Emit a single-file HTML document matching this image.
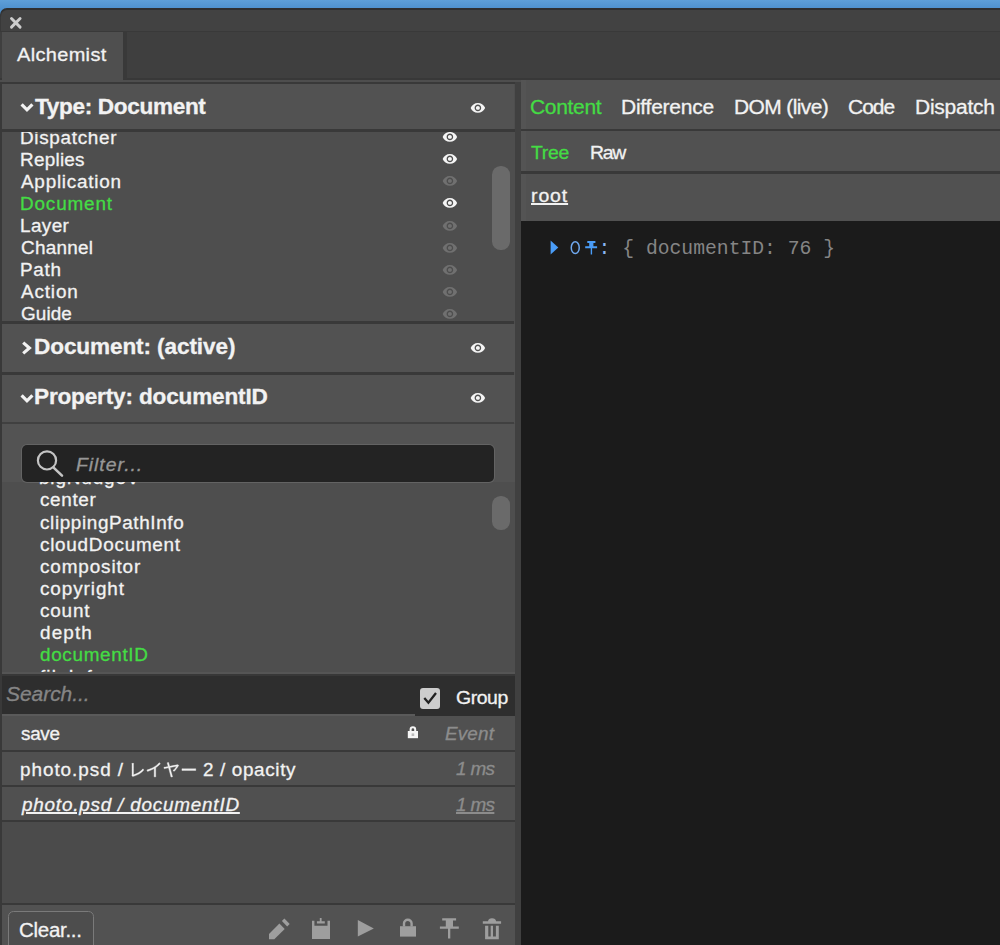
<!DOCTYPE html>
<html><head><meta charset="utf-8">
<style>
*{box-sizing:border-box;margin:0;padding:0}
html,body{width:1000px;height:945px;overflow:hidden;background:#4a8fd0}
body{font-family:"Liberation Sans",sans-serif;color:#f2f2f2;position:relative;font-size:18px}
div,svg{position:absolute}
.t{-webkit-text-stroke:0.3px currentColor;white-space:nowrap;line-height:24px;height:24px;transform-origin:0 50%}
.clip{left:0;width:514px;overflow:hidden}
.ln{background:#393939}
</style></head><body>
<!-- window chrome -->
<div style="left:0;top:0;width:1000px;height:12px;background:linear-gradient(#5e9fd8,#4e90cd 9px)"></div>
<div style="left:0;top:8.4px;width:1000px;height:937px;background:#2f2f2f;border-top-left-radius:7px"></div>
<div style="left:0;top:9.6px;width:1000px;height:936px;background:#393939;border-top-left-radius:6.5px"></div>
<div style="left:0.6px;top:9.6px;width:1000px;height:21.6px;background:#424242;border-top-left-radius:6.5px"></div>
<svg style="left:7.7px;top:14.7px" width="16" height="16" viewBox="0 0 16 16"><path d="M3.5 3.5 L12.1 12.1 M12.1 3.5 L3.5 12.1" stroke="#cccccc" stroke-width="2.9" stroke-linecap="round" fill="none"/></svg>
<!-- tab strip -->
<div style="left:0;top:32px;width:1000px;height:46px;background:#3f3f3f"></div>
<div style="left:0;top:78px;width:1000px;height:2px;background:#383838"></div>
<div style="left:0;top:80px;width:1000px;height:2px;background:#4e4e4e"></div>
<div style="left:1.5px;top:32px;width:121.3px;height:50px;background:#4f4f4f"></div>
<div style="left:122.8px;top:32px;width:4px;height:47px;background:#393939"></div>
<!-- panels -->
<div class="ln" style="left:0;top:81.7px;width:521px;height:2.3px"></div>
<div style="left:2px;top:84px;width:512.6px;height:861px;background:#4e4e4e"></div>
<div style="left:514.6px;top:82px;width:6.4px;height:863px;background:#404040"></div>
<div style="left:521px;top:80px;width:479px;height:144px;background:#515151"></div>
<div style="left:521px;top:80px;width:5px;height:141px;background:#545454"></div>
<div style="left:521px;top:221px;width:479px;height:724px;background:#1b1b1b"></div>

<!-- LEFT headers -->
<div style="left:2px;top:84px;width:512px;height:46px;background:#525252"></div>
<div class="ln" style="left:2px;top:129.3px;width:512.6px;height:2.7px"></div>
<div class="ln" style="left:2px;top:321px;width:512px;height:3px"></div>
<div style="left:2px;top:324px;width:512.6px;height:47.5px;background:#525252"></div>
<div class="ln" style="left:2px;top:371.5px;width:512px;height:3px"></div>
<div style="left:2px;top:374.5px;width:512.6px;height:48px;background:#525252"></div>
<div class="ln" style="left:2px;top:422px;width:512px;height:2px;background:#404040"></div>
<div style="left:2px;top:424px;width:512.6px;height:58px;background:#535353"></div>
<!-- chevrons -->
<svg style="left:18px;top:98px" width="18" height="18" viewBox="0 0 18 18"><path d="M3.6 6.3 L9 11.8 L14.4 6.3" stroke="#f2f2f2" stroke-width="3.2" fill="none"/></svg>
<svg style="left:18px;top:339px" width="18" height="18" viewBox="0 0 18 18"><path d="M5.2 3.6 L11.4 9 L5.2 14.4" stroke="#f2f2f2" stroke-width="3.2" fill="none"/></svg>
<svg style="left:18px;top:389px" width="18" height="18" viewBox="0 0 18 18"><path d="M3.6 6.3 L9 11.8 L14.4 6.3" stroke="#f2f2f2" stroke-width="3.2" fill="none"/></svg>
<!-- eyes -->
<svg style="left:469.7px;top:99.9px" width="15.8" height="15.8" viewBox="0 0 24 24"><path fill="#f5f5f5" d="M12 4.5C7 4.5 2.73 7.61 1 12c1.73 4.39 6 7.5 11 7.5s9.27-3.11 11-7.5c-1.73-4.39-6-7.5-11-7.5zM12 17c-2.76 0-5-2.24-5-5s2.24-5 5-5 5 2.24 5 5-2.24 5-5 5zm0-8c-1.66 0-3 1.34-3 3s1.34 3 3 3 3-1.34 3-3-1.34-3-3-3z"/></svg>
<svg style="left:469.9px;top:339.9px" width="15.8" height="15.8" viewBox="0 0 24 24"><path fill="#f5f5f5" d="M12 4.5C7 4.5 2.73 7.61 1 12c1.73 4.39 6 7.5 11 7.5s9.27-3.11 11-7.5c-1.73-4.39-6-7.5-11-7.5zM12 17c-2.76 0-5-2.24-5-5s2.24-5 5-5 5 2.24 5 5-2.24 5-5 5zm0-8c-1.66 0-3 1.34-3 3s1.34 3 3 3 3-1.34 3-3-1.34-3-3-3z"/></svg>
<svg style="left:469.9px;top:390.3px" width="15.8" height="15.8" viewBox="0 0 24 24"><path fill="#f5f5f5" d="M12 4.5C7 4.5 2.73 7.61 1 12c1.73 4.39 6 7.5 11 7.5s9.27-3.11 11-7.5c-1.73-4.39-6-7.5-11-7.5zM12 17c-2.76 0-5-2.24-5-5s2.24-5 5-5 5 2.24 5 5-2.24 5-5 5zm0-8c-1.66 0-3 1.34-3 3s1.34 3 3 3 3-1.34 3-3-1.34-3-3-3z"/></svg>
<div class="clip" style="top:132px;height:189px">
<svg style="left:442.4px;top:-2.9px" width="15.8" height="15.8" viewBox="0 0 24 24"><path fill="#f5f5f5" d="M12 4.5C7 4.5 2.73 7.61 1 12c1.73 4.39 6 7.5 11 7.5s9.27-3.11 11-7.5c-1.73-4.39-6-7.5-11-7.5zM12 17c-2.76 0-5-2.24-5-5s2.24-5 5-5 5 2.24 5 5-2.24 5-5 5zm0-8c-1.66 0-3 1.34-3 3s1.34 3 3 3 3-1.34 3-3-1.34-3-3-3z"/></svg>
<svg style="left:442.4px;top:19.2px" width="15.8" height="15.8" viewBox="0 0 24 24"><path fill="#f5f5f5" d="M12 4.5C7 4.5 2.73 7.61 1 12c1.73 4.39 6 7.5 11 7.5s9.27-3.11 11-7.5c-1.73-4.39-6-7.5-11-7.5zM12 17c-2.76 0-5-2.24-5-5s2.24-5 5-5 5 2.24 5 5-2.24 5-5 5zm0-8c-1.66 0-3 1.34-3 3s1.34 3 3 3 3-1.34 3-3-1.34-3-3-3z"/></svg>
<svg style="left:442.4px;top:41.3px" width="15.8" height="15.8" viewBox="0 0 24 24"><path fill="#707070" d="M12 4.5C7 4.5 2.73 7.61 1 12c1.73 4.39 6 7.5 11 7.5s9.27-3.11 11-7.5c-1.73-4.39-6-7.5-11-7.5zM12 17c-2.76 0-5-2.24-5-5s2.24-5 5-5 5 2.24 5 5-2.24 5-5 5zm0-8c-1.66 0-3 1.34-3 3s1.34 3 3 3 3-1.34 3-3-1.34-3-3-3z"/></svg>
<svg style="left:442.4px;top:63.4px" width="15.8" height="15.8" viewBox="0 0 24 24"><path fill="#f5f5f5" d="M12 4.5C7 4.5 2.73 7.61 1 12c1.73 4.39 6 7.5 11 7.5s9.27-3.11 11-7.5c-1.73-4.39-6-7.5-11-7.5zM12 17c-2.76 0-5-2.24-5-5s2.24-5 5-5 5 2.24 5 5-2.24 5-5 5zm0-8c-1.66 0-3 1.34-3 3s1.34 3 3 3 3-1.34 3-3-1.34-3-3-3z"/></svg>
<svg style="left:442.4px;top:85.5px" width="15.8" height="15.8" viewBox="0 0 24 24"><path fill="#707070" d="M12 4.5C7 4.5 2.73 7.61 1 12c1.73 4.39 6 7.5 11 7.5s9.27-3.11 11-7.5c-1.73-4.39-6-7.5-11-7.5zM12 17c-2.76 0-5-2.24-5-5s2.24-5 5-5 5 2.24 5 5-2.24 5-5 5zm0-8c-1.66 0-3 1.34-3 3s1.34 3 3 3 3-1.34 3-3-1.34-3-3-3z"/></svg>
<svg style="left:442.4px;top:107.6px" width="15.8" height="15.8" viewBox="0 0 24 24"><path fill="#707070" d="M12 4.5C7 4.5 2.73 7.61 1 12c1.73 4.39 6 7.5 11 7.5s9.27-3.11 11-7.5c-1.73-4.39-6-7.5-11-7.5zM12 17c-2.76 0-5-2.24-5-5s2.24-5 5-5 5 2.24 5 5-2.24 5-5 5zm0-8c-1.66 0-3 1.34-3 3s1.34 3 3 3 3-1.34 3-3-1.34-3-3-3z"/></svg>
<svg style="left:442.4px;top:129.7px" width="15.8" height="15.8" viewBox="0 0 24 24"><path fill="#707070" d="M12 4.5C7 4.5 2.73 7.61 1 12c1.73 4.39 6 7.5 11 7.5s9.27-3.11 11-7.5c-1.73-4.39-6-7.5-11-7.5zM12 17c-2.76 0-5-2.24-5-5s2.24-5 5-5 5 2.24 5 5-2.24 5-5 5zm0-8c-1.66 0-3 1.34-3 3s1.34 3 3 3 3-1.34 3-3-1.34-3-3-3z"/></svg>
<svg style="left:442.4px;top:151.8px" width="15.8" height="15.8" viewBox="0 0 24 24"><path fill="#707070" d="M12 4.5C7 4.5 2.73 7.61 1 12c1.73 4.39 6 7.5 11 7.5s9.27-3.11 11-7.5c-1.73-4.39-6-7.5-11-7.5zM12 17c-2.76 0-5-2.24-5-5s2.24-5 5-5 5 2.24 5 5-2.24 5-5 5zm0-8c-1.66 0-3 1.34-3 3s1.34 3 3 3 3-1.34 3-3-1.34-3-3-3z"/></svg>
<svg style="left:442.4px;top:173.9px" width="15.8" height="15.8" viewBox="0 0 24 24"><path fill="#707070" d="M12 4.5C7 4.5 2.73 7.61 1 12c1.73 4.39 6 7.5 11 7.5s9.27-3.11 11-7.5c-1.73-4.39-6-7.5-11-7.5zM12 17c-2.76 0-5-2.24-5-5s2.24-5 5-5 5 2.24 5 5-2.24 5-5 5zm0-8c-1.66 0-3 1.34-3 3s1.34 3 3 3 3-1.34 3-3-1.34-3-3-3z"/></svg>
</div>
<!-- scrollbars -->
<div style="left:492.3px;top:166px;width:17.3px;height:83.5px;border-radius:8.6px;background:#6a6a6a"></div>
<div style="left:492.3px;top:495.6px;width:17.3px;height:34.6px;border-radius:8.6px;background:#6a6a6a"></div>
<!-- filter -->
<div style="left:22px;top:444.5px;width:472px;height:37px;background:#232323;border-radius:5px;box-shadow:0 0 0 1px #636363"></div>
<svg style="left:34px;top:447px" width="32" height="32" viewBox="0 0 32 32"><circle cx="13" cy="13.4" r="9.1" stroke="#c4c4c4" stroke-width="2.2" fill="none"/><path d="M19.6 20.6 L28 28.6" stroke="#c4c4c4" stroke-width="2.6" stroke-linecap="round"/></svg>
<!-- search row -->
<div style="left:2px;top:672px;width:512.6px;height:44px;background:#2e2e2e"></div>
<div style="left:2px;top:672px;width:512.6px;height:1.5px;background:#555"></div>
<div style="left:2px;top:673.5px;width:512.6px;height:2px;background:#383838"></div>
<div style="left:2px;top:713.6px;width:412.5px;height:2.4px;background:#5a5a5a"></div>
<div style="left:419.8px;top:687.8px;width:20.5px;height:21px;background:#cdcdcd;border-radius:3px"></div>
<svg style="left:419.8px;top:687.8px" width="21" height="21" viewBox="0 0 21 21"><path d="M4.3 10.1 L8.4 14.8 L16 5" stroke="#222" stroke-width="2.3" fill="none"/></svg>
<!-- rows -->
<div style="left:2px;top:716px;width:512.6px;height:105px;background:#505050"></div>
<div class="ln" style="left:2px;top:750px;width:512.6px;height:2px"></div>
<div class="ln" style="left:2px;top:785px;width:512.6px;height:2px"></div>
<div class="ln" style="left:2px;top:820px;width:512.6px;height:1.7px"></div>
<div style="left:2px;top:821.7px;width:512.6px;height:81.3px;background:#4b4b4b"></div>
<!-- small lock -->
<svg style="left:405px;top:724px" width="16" height="16" viewBox="0 0 16 16"><path d="M2.8 7 H13 V14.2 H2.8 Z" fill="#f5f5f5"/><path d="M5.6 7.4 V5.6 A2.3 2.3 0 0 1 10.2 5.6 V7.4" stroke="#f5f5f5" stroke-width="2" fill="none"/><rect x="6.6" y="9.4" width="2.6" height="2.6" fill="#bbb"/></svg>
<!-- kana -->
<svg style="left:127.6px;top:759px" width="72" height="22" viewBox="0 0 72 22">
<g fill="#f2f2f2" stroke="#f2f2f2" stroke-width="22" transform="translate(0,17.3) scale(0.01739,-0.01739)">
<path d="M222 32 280 -18C296 -8 311 -3 322 0C571 72 777 196 907 357L862 427C738 266 506 134 315 86C315 137 315 558 315 653C315 682 318 719 322 744H223C227 724 232 679 232 653C232 558 232 143 232 81C232 61 229 48 222 32Z"/>
<path transform="translate(1000,0)" d="M86 361 126 283C265 326 402 386 507 446V76C507 38 504 -12 501 -31H599C595 -11 593 38 593 76V498C695 566 787 642 863 721L796 783C727 700 627 613 523 548C412 478 259 408 86 361Z"/>
<path transform="translate(2000,0)" d="M916 631 860 671C848 665 830 660 815 657C776 648 566 608 394 575L355 717C346 748 340 773 338 794L246 772C255 756 263 734 274 697L312 560L164 532C128 527 99 523 64 520L86 435C118 442 217 463 332 486L454 38C462 11 468 -22 472 -44L565 -22C557 1 545 35 539 56C522 112 464 323 415 503L797 578C760 514 664 391 582 326L663 287C745 368 869 532 916 631Z"/>
<path transform="translate(3000,0)" d="M102 433V335C133 338 186 340 241 340C316 340 715 340 790 340C835 340 877 336 897 335V433C875 431 839 428 789 428C715 428 315 428 241 428C185 428 132 431 102 433Z"/>
</g></svg>
<!-- bottom bar -->
<div class="ln" style="left:2px;top:903px;width:512.6px;height:2px"></div>
<div style="left:2px;top:905px;width:512.6px;height:40px;background:#525252"></div>
<div style="left:8px;top:911px;width:85.5px;height:42px;border:1.9px solid #7a7a7a;border-radius:5.5px;background:#4d4d4d"></div>
<svg style="left:260px;top:910px" width="254" height="35" viewBox="260 910 254 35"><g fill="#9e9e9e">
<path d="M269 939.3 L269 934 L279.4 923.6 L284.7 928.9 L274.3 939.3 Z"/>
<path d="M281.9 921.1 L284.4 918.6 L289.7 923.9 L287.2 926.4 Z"/>
<path d="M312 920.8 H314.4 V925.8 H327.5 V920.8 H330 V939 H312 Z"/>
<path d="M316.9 921.3 H319.8 V918 H321.6 V921.3 H324.8 V923.6 H316.9 Z"/>
<path d="M357.8 920.1 L373.8 928.4 L357.8 936.5 Z"/>
<path d="M400 926.2 H416 V936.6 H400 Z"/>
<path d="M404 926.6 V923.6 A3.8 3.8 0 0 1 411.6 923.6 V926.6" stroke="#9e9e9e" stroke-width="2.4" fill="none"/>
<path d="M442.2 918.3 H456.1 V920.6 H453 V926.4 H458.8 V928.7 H450.3 V938.4 H448 V928.7 H439.9 V926.4 H445.8 V920.6 H442.2 Z"/>
<path d="M482.8 921.3 H488 Q488.4 918.3 492 918.3 Q495.7 918.3 496.1 921.3 H501.1 V923.7 H482.8 Z"/>
<path d="M485.1 925.8 H488.3 V936.4 H490.7 V925.8 H493 V936.4 H495.9 V925.8 H498.8 V939.3 H485.1 Z"/>
</g></svg>

<!-- RIGHT lines -->
<div class="ln" style="left:521px;top:129.4px;width:479px;height:2px"></div>
<div class="ln" style="left:521px;top:171.4px;width:479px;height:2.2px"></div>
<!-- code line -->
<svg style="left:548px;top:238px" width="54" height="20" viewBox="548 238 54 20"><g fill="#4a9df8">
<path d="M550.6 240.6 L558.3 247.6 L550.6 254.6 Z"/>
<path d="M587.3 241 H595.4 V243 H593.4 V246.2 H597.1 V248.3 H592.1 V254.4 H590.7 V248.3 H585.2 V246.2 H589.2 V243 H587.3 Z"/>
</g><ellipse cx="575.25" cy="247.7" rx="4.0" ry="5.9" fill="none" stroke="#6fa8ee" stroke-width="1.5"/></svg>
<div class="t" style="left:598.6px;top:237.2px;-webkit-text-stroke:0;font-family:'Liberation Mono',monospace;font-size:19.7px;color:#8ab6f2;letter-spacing:0">:</div>
<div class="t" style="left:622.3px;top:237.2px;-webkit-text-stroke:0;font-family:'Liberation Mono',monospace;font-size:19.7px;color:#858585;letter-spacing:0">{ documentID: 76 }</div>
<div class="t" style="left:16.60px;top:42.82px;font-size:19px;letter-spacing:0.330px;transform:scaleX(1.0500);color:#f2f2f2;">Alchemist</div>
<div class="t" style="left:35.30px;top:95.05px;font-size:21.5px;letter-spacing:-0.316px;transform:scaleX(1.0500);color:#f2f2f2;font-weight:bold;">Type: Document</div>
<div class="t" style="left:34.15px;top:335.15px;font-size:21.5px;letter-spacing:-0.100px;transform:scaleX(1.0500);color:#f2f2f2;font-weight:bold;">Document: (active)</div>
<div class="t" style="left:34.35px;top:385.45px;font-size:21.5px;letter-spacing:-0.163px;transform:scaleX(1.0500);color:#f2f2f2;font-weight:bold;">Property: documentID</div>
<div class="clip" style="top:132px;height:189px"><div class="t" style="left:19.95px;top:-6.34px;font-size:18px;letter-spacing:0.657px;transform:scaleX(1.0500);color:#f2f2f2;">Dispatcher</div></div>
<div class="clip" style="top:132px;height:189px"><div class="t" style="left:19.95px;top:15.76px;font-size:18px;letter-spacing:0.241px;transform:scaleX(1.0500);color:#f2f2f2;">Replies</div></div>
<div class="clip" style="top:132px;height:189px"><div class="t" style="left:21.00px;top:37.86px;font-size:18px;letter-spacing:0.724px;transform:scaleX(1.0500);color:#f2f2f2;">Application</div></div>
<div class="clip" style="top:132px;height:189px"><div class="t" style="left:19.95px;top:59.96px;font-size:18px;letter-spacing:0.804px;transform:scaleX(1.0500);color:#44dc44;">Document</div></div>
<div class="clip" style="top:132px;height:189px"><div class="t" style="left:19.95px;top:82.06px;font-size:18px;letter-spacing:0.373px;transform:scaleX(1.0500);color:#f2f2f2;">Layer</div></div>
<div class="clip" style="top:132px;height:189px"><div class="t" style="left:21.00px;top:104.16px;font-size:18px;letter-spacing:0.261px;transform:scaleX(1.0500);color:#f2f2f2;">Channel</div></div>
<div class="clip" style="top:132px;height:189px"><div class="t" style="left:19.95px;top:126.26px;font-size:18px;letter-spacing:0.708px;transform:scaleX(1.0500);color:#f2f2f2;">Path</div></div>
<div class="clip" style="top:132px;height:189px"><div class="t" style="left:21.00px;top:148.36px;font-size:18px;letter-spacing:0.806px;transform:scaleX(1.0500);color:#f2f2f2;">Action</div></div>
<div class="clip" style="top:132px;height:189px"><div class="t" style="left:21.00px;top:170.46px;font-size:18px;letter-spacing:0.090px;transform:scaleX(1.0500);color:#f2f2f2;">Guide</div></div>
<div class="clip" style="top:482px;height:190px"><div class="t" style="left:38.65px;top:-15.64px;font-size:18px;letter-spacing:0.814px;transform:scaleX(1.0500);color:#f2f2f2;">bigNudgeV</div></div>
<div class="clip" style="top:482px;height:190px"><div class="t" style="left:39.70px;top:6.46px;font-size:18px;letter-spacing:0.622px;transform:scaleX(1.0500);color:#f2f2f2;">center</div></div>
<div class="clip" style="top:482px;height:190px"><div class="t" style="left:39.70px;top:28.56px;font-size:18px;letter-spacing:0.585px;transform:scaleX(1.0500);color:#f2f2f2;">clippingPathInfo</div></div>
<div class="clip" style="top:482px;height:190px"><div class="t" style="left:39.70px;top:50.66px;font-size:18px;letter-spacing:0.697px;transform:scaleX(1.0500);color:#f2f2f2;">cloudDocument</div></div>
<div class="clip" style="top:482px;height:190px"><div class="t" style="left:39.70px;top:72.76px;font-size:18px;letter-spacing:0.832px;transform:scaleX(1.0500);color:#f2f2f2;">compositor</div></div>
<div class="clip" style="top:482px;height:190px"><div class="t" style="left:39.70px;top:94.86px;font-size:18px;letter-spacing:0.870px;transform:scaleX(1.0500);color:#f2f2f2;">copyright</div></div>
<div class="clip" style="top:482px;height:190px"><div class="t" style="left:39.70px;top:116.96px;font-size:18px;letter-spacing:0.778px;transform:scaleX(1.0500);color:#f2f2f2;">count</div></div>
<div class="clip" style="top:482px;height:190px"><div class="t" style="left:39.70px;top:139.06px;font-size:18px;letter-spacing:1.087px;transform:scaleX(1.0500);color:#f2f2f2;">depth</div></div>
<div class="clip" style="top:482px;height:190px"><div class="t" style="left:39.70px;top:161.16px;font-size:18px;letter-spacing:0.635px;transform:scaleX(1.0500);color:#44dc44;">documentID</div></div>
<div class="clip" style="top:482px;height:190px"><div class="t" style="left:39.70px;top:183.26px;font-size:18px;letter-spacing:1.038px;transform:scaleX(1.0500);color:#f2f2f2;">fileInfo</div></div>
<div class="t" style="left:75.50px;top:452.59px;font-size:18.5px;letter-spacing:0.906px;transform:scaleX(1.0500);color:#969696;font-style:italic;">Filter...</div>
<div class="t" style="left:5.50px;top:682.07px;font-size:20px;letter-spacing:-0.048px;transform:scaleX(1.0500);color:#858585;font-style:italic;">Search...</div>
<div class="t" style="left:455.50px;top:686.09px;font-size:18.5px;letter-spacing:-0.401px;transform:scaleX(1.0500);color:#f2f2f2;">Group</div>
<div class="t" style="left:21.40px;top:721.66px;font-size:18px;letter-spacing:-0.289px;transform:scaleX(1.0500);color:#f2f2f2;">save</div>
<div class="t" style="left:20.35px;top:757.66px;font-size:18px;letter-spacing:0.908px;transform:scaleX(1.0500);color:#f2f2f2;">photo.psd /</div>
<div class="t" style="left:203.10px;top:757.66px;font-size:18px;letter-spacing:0.605px;transform:scaleX(1.0500);color:#f2f2f2;">2 / opacity</div>
<div class="t" style="left:21.55px;top:793.36px;font-size:18px;letter-spacing:0.743px;transform:scaleX(1.0500);color:#f2f2f2;font-style:italic;text-decoration:underline;text-decoration-thickness:1.9px;text-underline-offset:1.2px;">photo.psd / documentID</div>
<div class="t" style="left:445.00px;top:722.26px;font-size:18px;letter-spacing:0.148px;transform:scaleX(1.0500);color:#8c8c8c;font-style:italic;">Event</div>
<div class="t" style="left:456.00px;top:757.46px;font-size:18px;letter-spacing:-0.621px;transform:scaleX(1.0500);color:#8c8c8c;font-style:italic;">1 ms</div>
<div class="t" style="left:456.00px;top:793.36px;font-size:18px;letter-spacing:-0.621px;transform:scaleX(1.0500);color:#8c8c8c;font-style:italic;text-decoration:underline;text-decoration-thickness:1.9px;text-underline-offset:1.2px;">1 ms</div>
<div class="t" style="left:19.00px;top:917.64px;font-size:19.5px;letter-spacing:-0.269px;transform:scaleX(1.0500);color:#f2f2f2;">Clear...</div>
<div class="t" style="left:529.95px;top:95.27px;font-size:20px;letter-spacing:-0.312px;transform:scaleX(1.0500);color:#44dc44;">Content</div>
<div class="t" style="left:620.70px;top:95.27px;font-size:20px;letter-spacing:-0.228px;transform:scaleX(1.0500);color:#f2f2f2;">Difference</div>
<div class="t" style="left:733.95px;top:95.27px;font-size:20px;letter-spacing:-0.591px;transform:scaleX(1.0500);color:#f2f2f2;">DOM (live)</div>
<div class="t" style="left:847.95px;top:95.27px;font-size:20px;letter-spacing:-0.960px;transform:scaleX(1.0500);color:#f2f2f2;">Code</div>
<div class="t" style="left:914.95px;top:95.27px;font-size:20px;letter-spacing:-0.235px;transform:scaleX(1.0500);color:#f2f2f2;">Dispatch</div>
<div class="t" style="left:531.00px;top:141.09px;font-size:18.5px;letter-spacing:-0.291px;transform:scaleX(1.0500);color:#44dc44;">Tree</div>
<div class="t" style="left:589.95px;top:141.09px;font-size:18.5px;letter-spacing:-1.182px;transform:scaleX(1.0500);color:#f2f2f2;">Raw</div>
<div class="t" style="left:530.55px;top:183.59px;font-size:18.5px;letter-spacing:0.865px;transform:scaleX(1.0500);color:#f2f2f2;text-decoration:underline;text-decoration-thickness:1.9px;text-underline-offset:1.2px;">root</div>
</body></html>
